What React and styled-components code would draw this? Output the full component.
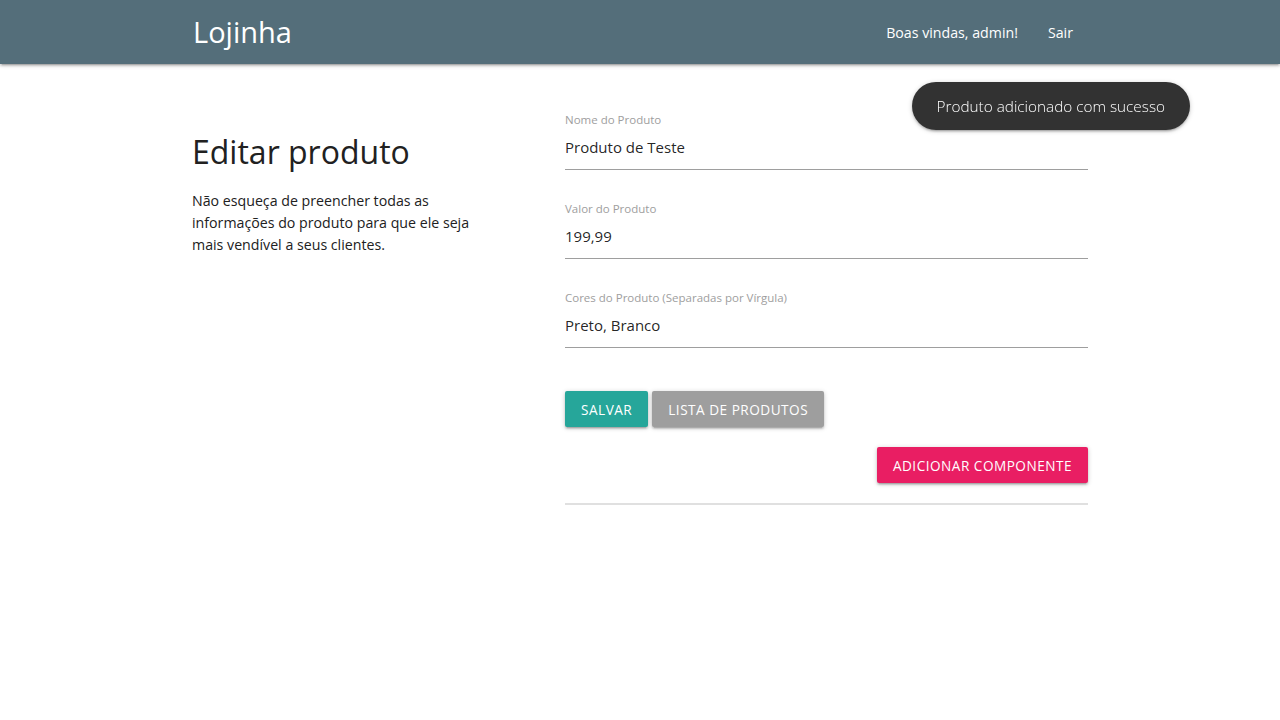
import React from "react";
import styled, { createGlobalStyle } from "styled-components";

const GlobalStyle = createGlobalStyle`
  html, body {
    margin: 0;
    padding: 0;
    background: #fff;
    font-family: "Open Sans", "Noto Sans", sans-serif;
    font-size: 15px;
    color: rgba(0, 0, 0, 0.87);
  }
  * {
    box-sizing: border-box;
  }
`;

const Nav = styled.nav`
  height: 64px;
  background: #546e7a;
  color: #fff;
  box-shadow: 0 2px 2px 0 rgba(0, 0, 0, 0.14), 0 3px 1px -2px rgba(0, 0, 0, 0.12),
    0 1px 5px 0 rgba(0, 0, 0, 0.2);
`;

const NavInner = styled.div`
  width: 896px;
  height: 100%;
  margin: 0 auto;
  display: flex;
  align-items: center;
  justify-content: space-between;
`;

const Brand = styled.a`
  font-size: 29px;
  color: #fff;
  text-decoration: none;
  margin-left: 1px;
  margin-top: -1px;
`;

const NavLinks = styled.ul`
  display: flex;
  list-style: none;
  margin: 0;
  padding: 0;
  height: 100%;
`;

const NavLink = styled.li`
  display: flex;
  align-items: center;
  padding: 0 15px;
  font-size: 14.2px;
  color: #fff;
  cursor: pointer;
`;

const Container = styled.main`
  width: 896px;
  margin: 0 auto;
  display: grid;
  grid-template-columns: 298px 75px 523px;
  padding-top: 48px;
`;

const Intro = styled.section`
  grid-column: 1;
  padding-top: 22px;
`;

const Title = styled.h4`
  font-size: 32px;
  font-weight: 400;
  line-height: 36px;
  margin: 0 0 20px;
  color: #212121;
`;

const Text = styled.p`
  font-size: 14.2px;
  line-height: 22px;
  margin: 0;
  color: #212121;
`;

const Form = styled.form`
  grid-column: 3;
  display: flex;
  flex-direction: column;
`;

const Field = styled.div`
  display: flex;
  flex-direction: column;
  margin-bottom: 31px;
`;

const Label = styled.label`
  font-size: 11.5px;
  line-height: 14px;
  margin-top: 1px;
  margin-bottom: -1px;
  color: #9e9e9e;
`;

const Input = styled.input`
  height: 44px;
  border: none;
  border-bottom: 1px solid #9e9e9e;
  padding: 0 0 2px;
  font-family: inherit;
  font-size: 15px;
  color: rgba(0, 0, 0, 0.87);
  background: transparent;
  outline: none;
`;

const Actions = styled.div`
  display: flex;
  gap: 4px;
  margin-top: 12px;
`;

const RightActions = styled.div`
  display: flex;
  justify-content: flex-end;
  margin-top: 20px;
`;

const Button = styled.button`
  height: 36px;
  padding: 0 16px;
  border: none;
  border-radius: 2px;
  background: ${({ color }) => color};
  color: #fff;
  font-family: inherit;
  font-size: 13.6px;
  letter-spacing: 0.5px;
  text-transform: uppercase;
  cursor: pointer;
  box-shadow: 0 2px 2px 0 rgba(0, 0, 0, 0.14), 0 3px 1px -2px rgba(0, 0, 0, 0.12),
    0 1px 5px 0 rgba(0, 0, 0, 0.2);
`;

const Divider = styled.hr`
  border: none;
  border-top: 2px solid #e0e0e0;
  margin: 20px 0 0;
`;

const Toast = styled.div`
  position: fixed;
  top: 82px;
  right: 90px;
  min-height: 48px;
  padding: 0 25px;
  display: flex;
  align-items: center;
  border-radius: 24px;
  background: #323232;
  color: #fff;
  font-size: 15.3px;
  font-weight: 300;
  box-shadow: 0 2px 2px 0 rgba(0, 0, 0, 0.14), 0 3px 1px -2px rgba(0, 0, 0, 0.12),
    0 1px 5px 0 rgba(0, 0, 0, 0.2);
`;

const fields = [
  { label: "Nome do Produto", value: "Produto de Teste" },
  { label: "Valor do Produto", value: "199,99" },
  { label: "Cores do Produto (Separadas por Vírgula)", value: "Preto, Branco" },
];

const App = () => {
  return (
    <React.Fragment>
      <GlobalStyle />
      <Nav>
        <NavInner>
          <Brand href="#">Lojinha</Brand>
          <NavLinks>
            <NavLink>Boas vindas, admin!</NavLink>
            <NavLink>Sair</NavLink>
          </NavLinks>
        </NavInner>
      </Nav>
      <Container>
        <Intro>
          <Title>Editar produto</Title>
          <Text>
            Não esqueça de preencher todas as informações do produto para que ele seja mais
            vendível a seus clientes.
          </Text>
        </Intro>
        <Form onSubmit={(e) => e.preventDefault()}>
          {fields.map((f) => (
            <Field key={f.label}>
              <Label>{f.label}</Label>
              <Input defaultValue={f.value} />
            </Field>
          ))}
          <Actions>
            <Button color="#26a69a">Salvar</Button>
            <Button color="#9e9e9e" type="button">
              Lista de produtos
            </Button>
          </Actions>
          <RightActions>
            <Button color="#e91e63" type="button">
              Adicionar componente
            </Button>
          </RightActions>
          <Divider />
        </Form>
      </Container>
      <Toast>Produto adicionado com sucesso</Toast>
    </React.Fragment>
  );
};

export default App;
